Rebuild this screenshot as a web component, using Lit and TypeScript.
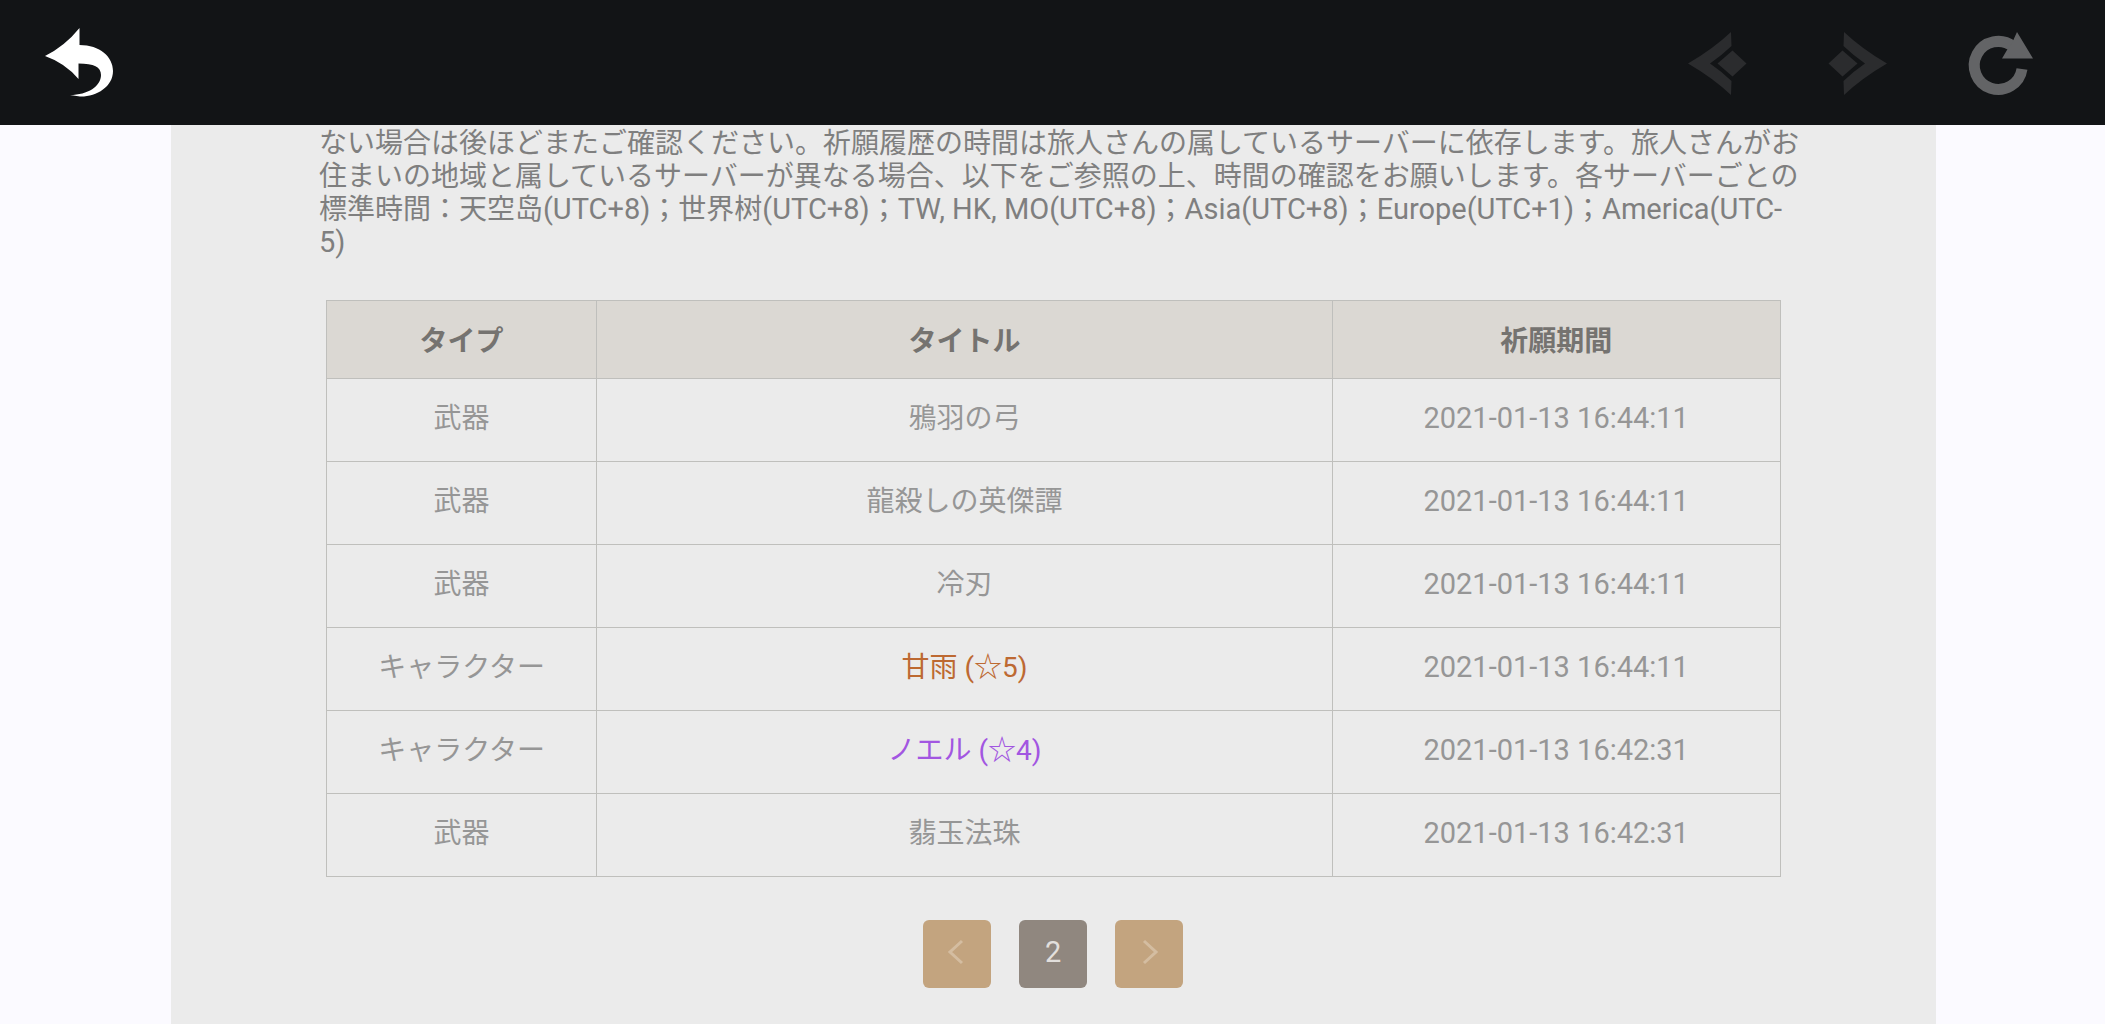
import { LitElement, html, css, svg } from "lit";
import { customElement, state } from "lit/decorators.js";
import { classMap } from "lit/directives/class-map.js";

interface Wish {
  type: string;
  title: string;
  time: string;
  rarity?: "five" | "four";
}

const WISHES: Wish[] = [
  { type: "武器", title: "鴉羽の弓", time: "2021-01-13 16:44:11" },
  { type: "武器", title: "龍殺しの英傑譚", time: "2021-01-13 16:44:11" },
  { type: "武器", title: "冷刃", time: "2021-01-13 16:44:11" },
  { type: "キャラクター", title: "甘雨 (☆5)", time: "2021-01-13 16:44:11", rarity: "five" },
  { type: "キャラクター", title: "ノエル (☆4)", time: "2021-01-13 16:42:31", rarity: "four" },
  { type: "武器", title: "翡玉法珠", time: "2021-01-13 16:42:31" },
];

const chevron = svg`
  <path d="M11 40.5Q36 26 54 9L54.500 23Q44 33 33 40.5Q44 48 54.500 58L54 72Q36 55 11 40.5Z"/>
  <path d="M40.500 40.5L55.500 27.500L69.500 40.5L55.500 53.500Z"/>`;

@customElement("browser-bar")
export class BrowserBar extends LitElement {
  static styles = css`
    :host {
      display: block;
      background: #121416;
    }
    .bar {
      display: flex;
      align-items: center;
      justify-content: space-between;
      height: 125px;
      padding: 0 66px 0 40px;
      box-sizing: border-box;
    }
    .group {
      display: flex;
      gap: 61px;
    }
    button {
      display: block;
      width: 80px;
      height: 80px;
      padding: 0;
      border: 0;
      background: none;
    }
    svg {
      display: block;
      width: 80px;
      height: 80px;
    }
    .back {
      fill: #ffffff;
    }
    .dim {
      fill: #2b2c2e;
    }
    .reload {
      fill: #636466;
    }
    .ring {
      fill: none;
      stroke: #636466;
      stroke-width: 11;
    }
  `;

  render() {
    return html`
      <nav class="bar" aria-label="ブラウザ">
        <button type="button" aria-label="戻る">
          <svg class="back" viewBox="0 0 80 80">
            <path d="M5 33Q25 23 39.500 5V22C60 22 73 34 73 48C73 64 56 74 40 73.500L30 72C48 72 61 63 61 52C61 44 54 40.500 38.500 40.500V56Q25 40 5 33Z"/>
          </svg>
        </button>
        <div class="group">
          <button type="button" aria-label="前のページ" disabled>
            <svg class="dim" viewBox="0 0 80 80">${chevron}</svg>
          </button>
          <button type="button" aria-label="次のページ" disabled>
            <svg class="dim" viewBox="0 0 80 80">
              <g transform="matrix(-1 0 0 1 80 0)">${chevron}</g>
            </svg>
          </button>
          <button type="button" aria-label="再読み込み">
            <svg class="reload" viewBox="0 0 80 80">
              <path class="ring" d="M54 23.500A24 24 0 1 0 63 46"/>
              <path d="M58 9L74 35.500H43L48 27L53 20Z"/>
            </svg>
          </button>
        </div>
      </nav>
    `;
  }
}

@customElement("wish-table")
export class WishTable extends LitElement {
  static styles = css`
    :host {
      display: block;
    }
    table {
      width: 100%;
      border-collapse: collapse;
      table-layout: fixed;
      text-align: center;
      font-size: 28px;
      line-height: 33px;
      color: #969696;
    }
    .type {
      width: 18.6%;
    }
    .time {
      width: 30.8%;
    }
    th,
    td {
      box-sizing: border-box;
      border: 1px solid #bfbfbc;
      font-weight: 400;
    }
    th {
      height: 78px;
      padding: 4px 0 0;
      background: #dbd8d3;
      color: #757370;
      font-weight: 700;
    }
    td {
      height: 83px;
      padding: 0 0 4px;
    }
    .date {
      font-size: 29px;
    }
    .five {
      color: #bd6932;
    }
    .four {
      color: #a256e1;
    }
  `;

  render() {
    return html`
      <table>
        <thead>
          <tr>
            <th class="type" scope="col">タイプ</th>
            <th scope="col">タイトル</th>
            <th class="time" scope="col">祈願期間</th>
          </tr>
        </thead>
        <tbody>
          ${WISHES.map(
            (w) => html`
              <tr>
                <td>${w.type}</td>
                <td class=${classMap({ five: w.rarity === "five", four: w.rarity === "four" })}>${w.title}</td>
                <td class="date">${w.time}</td>
              </tr>
            `
          )}
        </tbody>
      </table>
    `;
  }
}

@customElement("app-root")
export class AppRoot extends LitElement {
  static styles = css`
    :host {
      display: flex;
      flex-direction: column;
      min-height: 100vh;
      background: #fbfaff;
      font-family: Roboto, "Noto Sans CJK JP", sans-serif;
    }
    .panel {
      flex: 1;
      box-sizing: border-box;
      margin: 0 8.05% 0 8.12%;
      padding: 2px 132px 36px 148px;
      background: #ebebeb;
    }
    .note {
      margin: 0;
      font-size: 28px;
      line-height: 33px;
      color: #7f7f7f;
    }
    .latin {
      font-size: 29px;
    }
    .records {
      margin: 41px 23px 0 7px;
    }
    .pager {
      display: flex;
      justify-content: center;
      gap: 28px;
      margin: 43px 16px 0 0;
    }
    .page {
      display: flex;
      align-items: center;
      justify-content: center;
      width: 68px;
      height: 68px;
      padding: 0 0 4px;
      border: 0;
      border-radius: 6px;
      background: #c3a47f;
      color: #e2dfdc;
      font-family: inherit;
      font-size: 29px;
    }
    .current {
      background: #90877f;
    }
    .page svg {
      width: 24px;
      height: 28px;
      fill: none;
      stroke: #d4bda1;
      stroke-width: 3;
    }
  `;

  @state() private page = 2;

  render() {
    return html`
      <browser-bar></browser-bar>
      <main class="panel">
        <p class="note">ない場合は後ほどまたご確認ください。祈願履歴の時間は旅人さんの属しているサーバーに依存します。旅人さんがお住まいの地域と属しているサーバーが異なる場合、以下をご参照の上、時間の確認をお願いします。各サーバーごとの標準時間：天空岛<span class="latin">(UTC+8)</span>；世界树<span class="latin">(UTC+8)</span>；<span class="latin">TW, HK, MO(UTC+8)</span>；<span class="latin">Asia(UTC+8)</span>；<span class="latin">Europe(UTC+1)</span>；<span class="latin">America(UTC-<br>5)</span></p>
        <wish-table class="records"></wish-table>
        <nav class="pager" aria-label="ページ">
          <button class="page" type="button" aria-label="前へ">
            <svg viewBox="0 0 24 28"><path d="M17 3L5 14L17 25"/></svg>
          </button>
          <button class="page current" type="button" aria-current="page">${this.page}</button>
          <button class="page" type="button" aria-label="次へ">
            <svg viewBox="0 0 24 28"><path d="M7 3L19 14L7 25"/></svg>
          </button>
        </nav>
      </main>
    `;
  }
}
